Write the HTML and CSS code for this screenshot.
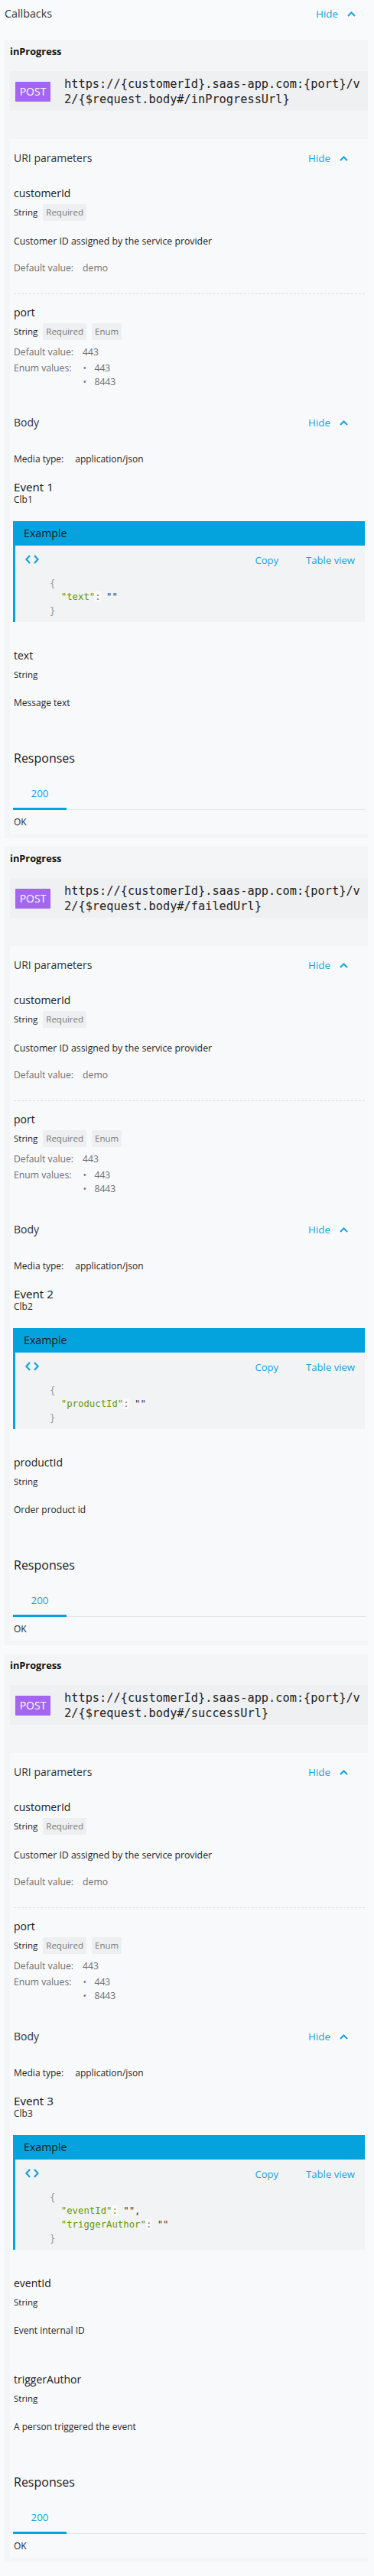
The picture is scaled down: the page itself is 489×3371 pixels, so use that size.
FILE: index.html
```html
<!DOCTYPE html>
<html lang="en">
<head>
<meta charset="utf-8">
<title>Callbacks</title>
<link rel="stylesheet" href="styles.css">
</head>
<body>
<div class="page">
  <div class="top-head">
    <span class="top-title">Callbacks</span>
    <span class="hide">Hide <svg class="chev" width="11" height="7" viewBox="0 0 11 7"><path d="M1 6 L5.5 1.5 L10 6" fill="none" stroke="currentColor" stroke-width="2"/></svg></span>
  </div>

  <!-- Callback 1 -->
  <section class="card">
    <div class="card-title">inProgress</div>
    <div class="url-box">
      <span class="badge-post">POST</span>
      <span class="url">https://{customerId}.saas-app.com:{port}/v2/{$request.body#/inProgressUrl}</span>
    </div>
    <div class="panel">
      <div class="panel-head"><span>URI parameters</span><span class="hide">Hide <svg class="chev" width="11" height="7" viewBox="0 0 11 7"><path d="M1 6 L5.5 1.5 L10 6" fill="none" stroke="currentColor" stroke-width="2"/></svg></span></div>
      <div class="param first">
        <div class="pname">customerId</div>
        <div class="meta"><span class="type">String</span><span class="tag">Required</span></div>
        <div class="desc">Customer ID assigned by the service provider</div>
        <div class="kv"><span class="k">Default value:</span><span class="v">demo</span></div>
      </div>
      <div class="param">
        <div class="pname">port</div>
        <div class="meta"><span class="type">String</span><span class="tag">Required</span><span class="tag">Enum</span></div>
        <div class="kv kv-tight"><span class="k">Default value:</span><span class="v">443</span></div>
        <div class="kv enum"><span class="k">Enum values:</span><ul class="enum-list"><li>443</li><li>8443</li></ul></div>
      </div>
      <div class="panel-head body-head"><span>Body</span><span class="hide">Hide <svg class="chev" width="11" height="7" viewBox="0 0 11 7"><path d="M1 6 L5.5 1.5 L10 6" fill="none" stroke="currentColor" stroke-width="2"/></svg></span></div>
      <div class="media"><span class="mk">Media type:</span><span>application/json</span></div>
      <div class="event">Event 1</div>
      <div class="event-sub">Clb1</div>
      <div class="example">
        <div class="ex-head">Example</div>
        <div class="ex-body">
          <div class="ex-tools">
            <svg class="code-ic" width="18" height="14" viewBox="0 0 18 14"><path d="M6 2 L1.5 7 L6 12 M12 2 L16.5 7 L12 12" fill="none" stroke="currentColor" stroke-width="2.2"/></svg>
            <span class="tools-right"><span>Copy</span><span>Table view</span></span>
          </div>
<pre class="code"><span class="p">{</span>
  <span class="s">"text"</span><span class="o">:</span> ""
<span class="p">}</span></pre>
        </div>
      </div>
      <div class="field">
        <div class="pname">text</div>
        <div class="ftype">String</div>
        <div class="fdesc">Message text</div>
      </div>
      <div class="resp-title">Responses</div>
      <div class="tabs"><span class="tab">200</span></div>
      <div class="resp-ok">OK</div>
    </div>
  </section>

  <!-- Callback 2 -->
  <section class="card">
    <div class="card-title">inProgress</div>
    <div class="url-box">
      <span class="badge-post">POST</span>
      <span class="url">https://{customerId}.saas-app.com:{port}/v2/{$request.body#/failedUrl}</span>
    </div>
    <div class="panel">
      <div class="panel-head"><span>URI parameters</span><span class="hide">Hide <svg class="chev" width="11" height="7" viewBox="0 0 11 7"><path d="M1 6 L5.5 1.5 L10 6" fill="none" stroke="currentColor" stroke-width="2"/></svg></span></div>
      <div class="param first">
        <div class="pname">customerId</div>
        <div class="meta"><span class="type">String</span><span class="tag">Required</span></div>
        <div class="desc">Customer ID assigned by the service provider</div>
        <div class="kv"><span class="k">Default value:</span><span class="v">demo</span></div>
      </div>
      <div class="param">
        <div class="pname">port</div>
        <div class="meta"><span class="type">String</span><span class="tag">Required</span><span class="tag">Enum</span></div>
        <div class="kv kv-tight"><span class="k">Default value:</span><span class="v">443</span></div>
        <div class="kv enum"><span class="k">Enum values:</span><ul class="enum-list"><li>443</li><li>8443</li></ul></div>
      </div>
      <div class="panel-head body-head"><span>Body</span><span class="hide">Hide <svg class="chev" width="11" height="7" viewBox="0 0 11 7"><path d="M1 6 L5.5 1.5 L10 6" fill="none" stroke="currentColor" stroke-width="2"/></svg></span></div>
      <div class="media"><span class="mk">Media type:</span><span>application/json</span></div>
      <div class="event">Event 2</div>
      <div class="event-sub">Clb2</div>
      <div class="example">
        <div class="ex-head">Example</div>
        <div class="ex-body">
          <div class="ex-tools">
            <svg class="code-ic" width="18" height="14" viewBox="0 0 18 14"><path d="M6 2 L1.5 7 L6 12 M12 2 L16.5 7 L12 12" fill="none" stroke="currentColor" stroke-width="2.2"/></svg>
            <span class="tools-right"><span>Copy</span><span>Table view</span></span>
          </div>
<pre class="code"><span class="p">{</span>
  <span class="s">"productId"</span><span class="o">:</span> ""
<span class="p">}</span></pre>
        </div>
      </div>
      <div class="field">
        <div class="pname">productId</div>
        <div class="ftype">String</div>
        <div class="fdesc">Order product id</div>
      </div>
      <div class="resp-title">Responses</div>
      <div class="tabs"><span class="tab">200</span></div>
      <div class="resp-ok">OK</div>
    </div>
  </section>

  <!-- Callback 3 -->
  <section class="card">
    <div class="card-title">inProgress</div>
    <div class="url-box">
      <span class="badge-post">POST</span>
      <span class="url">https://{customerId}.saas-app.com:{port}/v2/{$request.body#/successUrl}</span>
    </div>
    <div class="panel">
      <div class="panel-head"><span>URI parameters</span><span class="hide">Hide <svg class="chev" width="11" height="7" viewBox="0 0 11 7"><path d="M1 6 L5.5 1.5 L10 6" fill="none" stroke="currentColor" stroke-width="2"/></svg></span></div>
      <div class="param first">
        <div class="pname">customerId</div>
        <div class="meta"><span class="type">String</span><span class="tag">Required</span></div>
        <div class="desc">Customer ID assigned by the service provider</div>
        <div class="kv"><span class="k">Default value:</span><span class="v">demo</span></div>
      </div>
      <div class="param">
        <div class="pname">port</div>
        <div class="meta"><span class="type">String</span><span class="tag">Required</span><span class="tag">Enum</span></div>
        <div class="kv kv-tight"><span class="k">Default value:</span><span class="v">443</span></div>
        <div class="kv enum"><span class="k">Enum values:</span><ul class="enum-list"><li>443</li><li>8443</li></ul></div>
      </div>
      <div class="panel-head body-head"><span>Body</span><span class="hide">Hide <svg class="chev" width="11" height="7" viewBox="0 0 11 7"><path d="M1 6 L5.5 1.5 L10 6" fill="none" stroke="currentColor" stroke-width="2"/></svg></span></div>
      <div class="media"><span class="mk">Media type:</span><span>application/json</span></div>
      <div class="event">Event 3</div>
      <div class="event-sub">Clb3</div>
      <div class="example">
        <div class="ex-head">Example</div>
        <div class="ex-body">
          <div class="ex-tools">
            <svg class="code-ic" width="18" height="14" viewBox="0 0 18 14"><path d="M6 2 L1.5 7 L6 12 M12 2 L16.5 7 L12 12" fill="none" stroke="currentColor" stroke-width="2.2"/></svg>
            <span class="tools-right"><span>Copy</span><span>Table view</span></span>
          </div>
<pre class="code"><span class="p">{</span>
  <span class="s">"eventId"</span><span class="o">:</span> "",
  <span class="s">"triggerAuthor"</span><span class="o">:</span> ""
<span class="p">}</span></pre>
        </div>
      </div>
      <div class="field">
        <div class="pname">eventId</div>
        <div class="ftype">String</div>
        <div class="fdesc">Event internal ID</div>
      </div>
      <div class="field">
        <div class="pname">triggerAuthor</div>
        <div class="ftype">String</div>
        <div class="fdesc">A person triggered the event</div>
      </div>
      <div class="resp-title">Responses</div>
      <div class="tabs"><span class="tab">200</span></div>
      <div class="resp-ok">OK</div>
    </div>
  </section>
</div>
</body>
</html>
```

FILE: styles.css
```css
* { box-sizing: border-box; }

html, body {
  margin: 0;
  padding: 0;
  background: #f9fafb;
}

body {
  font-family: "Open Sans", "Noto Sans", sans-serif;
  color: #1f1f1f;
}

.page {
  padding-bottom: 5px;
}

.top-head {
  display: flex;
  justify-content: space-between;
  align-items: center;
  height: 36px;
  padding: 0 24px 0 6px;
  margin-bottom: 16px;
}

.top-title {
  font-size: 14.3px;
  line-height: 20px;
  color: #333;
}

.hide {
  display: inline-flex;
  align-items: center;
  gap: 12px;
  font-size: 13.4px;
  line-height: 18px;
  color: #17a2dc;
}

.chev {
  display: block;
}

.card {
  margin: 0 8px 11px 6px;
  background: #f4f5f6;
  padding: 7px 0 6px 7px;
}

.card-title {
  font-weight: 700;
  font-size: 12.8px;
  line-height: 16px;
  color: #111;
}

.url-box {
  margin-top: 18px;
  background: #eff0f2;
  display: flex;
  align-items: center;
  gap: 18px;
  padding: 7px 8px 5px 7px;
}

.badge-post {
  flex: none;
  width: 46px;
  height: 26px;
  display: flex;
  align-items: center;
  justify-content: center;
  background: #a466f1;
  color: #fff;
  font-size: 14px;
  line-height: 18px;
  border-radius: 1px;
}

.url {
  flex: 1;
  font-family: "DejaVu Sans Mono", monospace;
  font-size: 15.3px;
  line-height: 20px;
  color: #222;
  word-break: break-all;
}

.panel {
  margin-top: 37px;
  background: #f8f9fb;
  padding: 0 4px 6px 5px;
}

.panel-head {
  display: flex;
  justify-content: space-between;
  align-items: center;
  padding: 15px 22px 0 0;
  line-height: 20px;
  font-size: 14px;
  color: #333;
}

.param {
  border-bottom: 1px dashed #dcdde0;
  padding-bottom: 24px;
}

.param.first {
  margin-top: 26px;
}

.param + .param {
  border-bottom: none;
  padding-top: 14px;
  padding-bottom: 0;
}

.pname {
  font-size: 14px;
  line-height: 20px;
  color: #1a1a1a;
}

.meta {
  display: flex;
  align-items: center;
  gap: 7px;
  margin-top: 4px;
  height: 22px;
}

.type {
  font-size: 11.5px;
  line-height: 16px;
  color: #222;
}

.tag {
  display: inline-flex;
  align-items: center;
  height: 22px;
  padding: 0 4px;
  background: #eeeff0;
  color: #777;
  font-size: 11.5px;
  line-height: 16px;
  border-radius: 2px;
}

.desc {
  margin-top: 18px;
  font-size: 12.3px;
  line-height: 18px;
  color: #1f1f1f;
}

.kv {
  display: flex;
  gap: 12px;
  margin-top: 17px;
  font-size: 12.2px;
  line-height: 18px;
  color: #6e6e6e;
}

.kv-tight {
  margin-top: 7px;
}

.enum {
  margin-top: 3px;
}

.enum-list {
  list-style: none;
  margin: 0;
  padding: 0 0 0 3px;
}

.enum-list li {
  display: flex;
}

.enum-list li::before {
  content: "\2022";
  width: 15px;
  flex: none;
  color: #777;
}

.body-head {
  padding-top: 34px;
}

.media {
  display: flex;
  gap: 15px;
  margin-top: 29px;
  font-size: 12px;
  line-height: 18px;
  color: #1f1f1f;
}

.event {
  margin-top: 18px;
  font-size: 15.2px;
  line-height: 18px;
  color: #111;
}

.event-sub {
  font-size: 12px;
  line-height: 16px;
  color: #1f1f1f;
}

.example {
  margin: 20px 0 0 -1px;
  width: 460px;
}

.ex-head {
  height: 32px;
  background: #05a3dd;
  display: flex;
  align-items: center;
  padding-left: 14px;
  font-size: 14.2px;
  line-height: 20px;
  color: #1a1a1a;
}

.ex-body {
  background: #f2f3f5;
  border-left: 3px solid #05a3dd;
  padding: 6px 13px 6px 13px;
}

.ex-tools {
  display: flex;
  justify-content: space-between;
  align-items: center;
  height: 26px;
  color: #17a2dc;
}

.code-ic {
  display: block;
  margin-top: -2px;
}

.tools-right {
  display: flex;
  gap: 36px;
  font-size: 13.1px;
  line-height: 18px;
}

.code {
  margin: 8px 0 0 0;
  padding-left: 32px;
  font-family: "DejaVu Sans Mono", monospace;
  font-size: 12.3px;
  line-height: 18px;
  color: #333;
}

.code .p { color: #999; }
.code .s { color: #669900; }
.code .o { color: #9a6e3a; background: rgba(255, 255, 255, 0.6); }

.field {
  margin-top: 34px;
}

.field + .field {
  margin-top: 45px;
}

.ftype {
  margin-top: 7px;
  font-size: 11.5px;
  line-height: 16px;
  color: #222;
}

.fdesc {
  margin-top: 20px;
  font-size: 12px;
  line-height: 18px;
  color: #1f1f1f;
}

.resp-title {
  margin-top: 52px;
  font-size: 16px;
  line-height: 22px;
  color: #1a1a1a;
}

.tabs {
  margin-top: 20px;
  width: 461px;
  margin-left: -1px;
  border-bottom: 1px solid #e2e4e7;
  display: flex;
}

.tab {
  width: 70px;
  text-align: center;
  padding: 6px 0 10px;
  line-height: 18px;
  font-size: 13.4px;
  color: #17a2dc;
  border-bottom: 3px solid #05a3dd;
  margin-bottom: -1px;
}

.resp-ok {
  margin-top: 7px;
  font-size: 12px;
  line-height: 18px;
  color: #1f1f1f;
}
```
